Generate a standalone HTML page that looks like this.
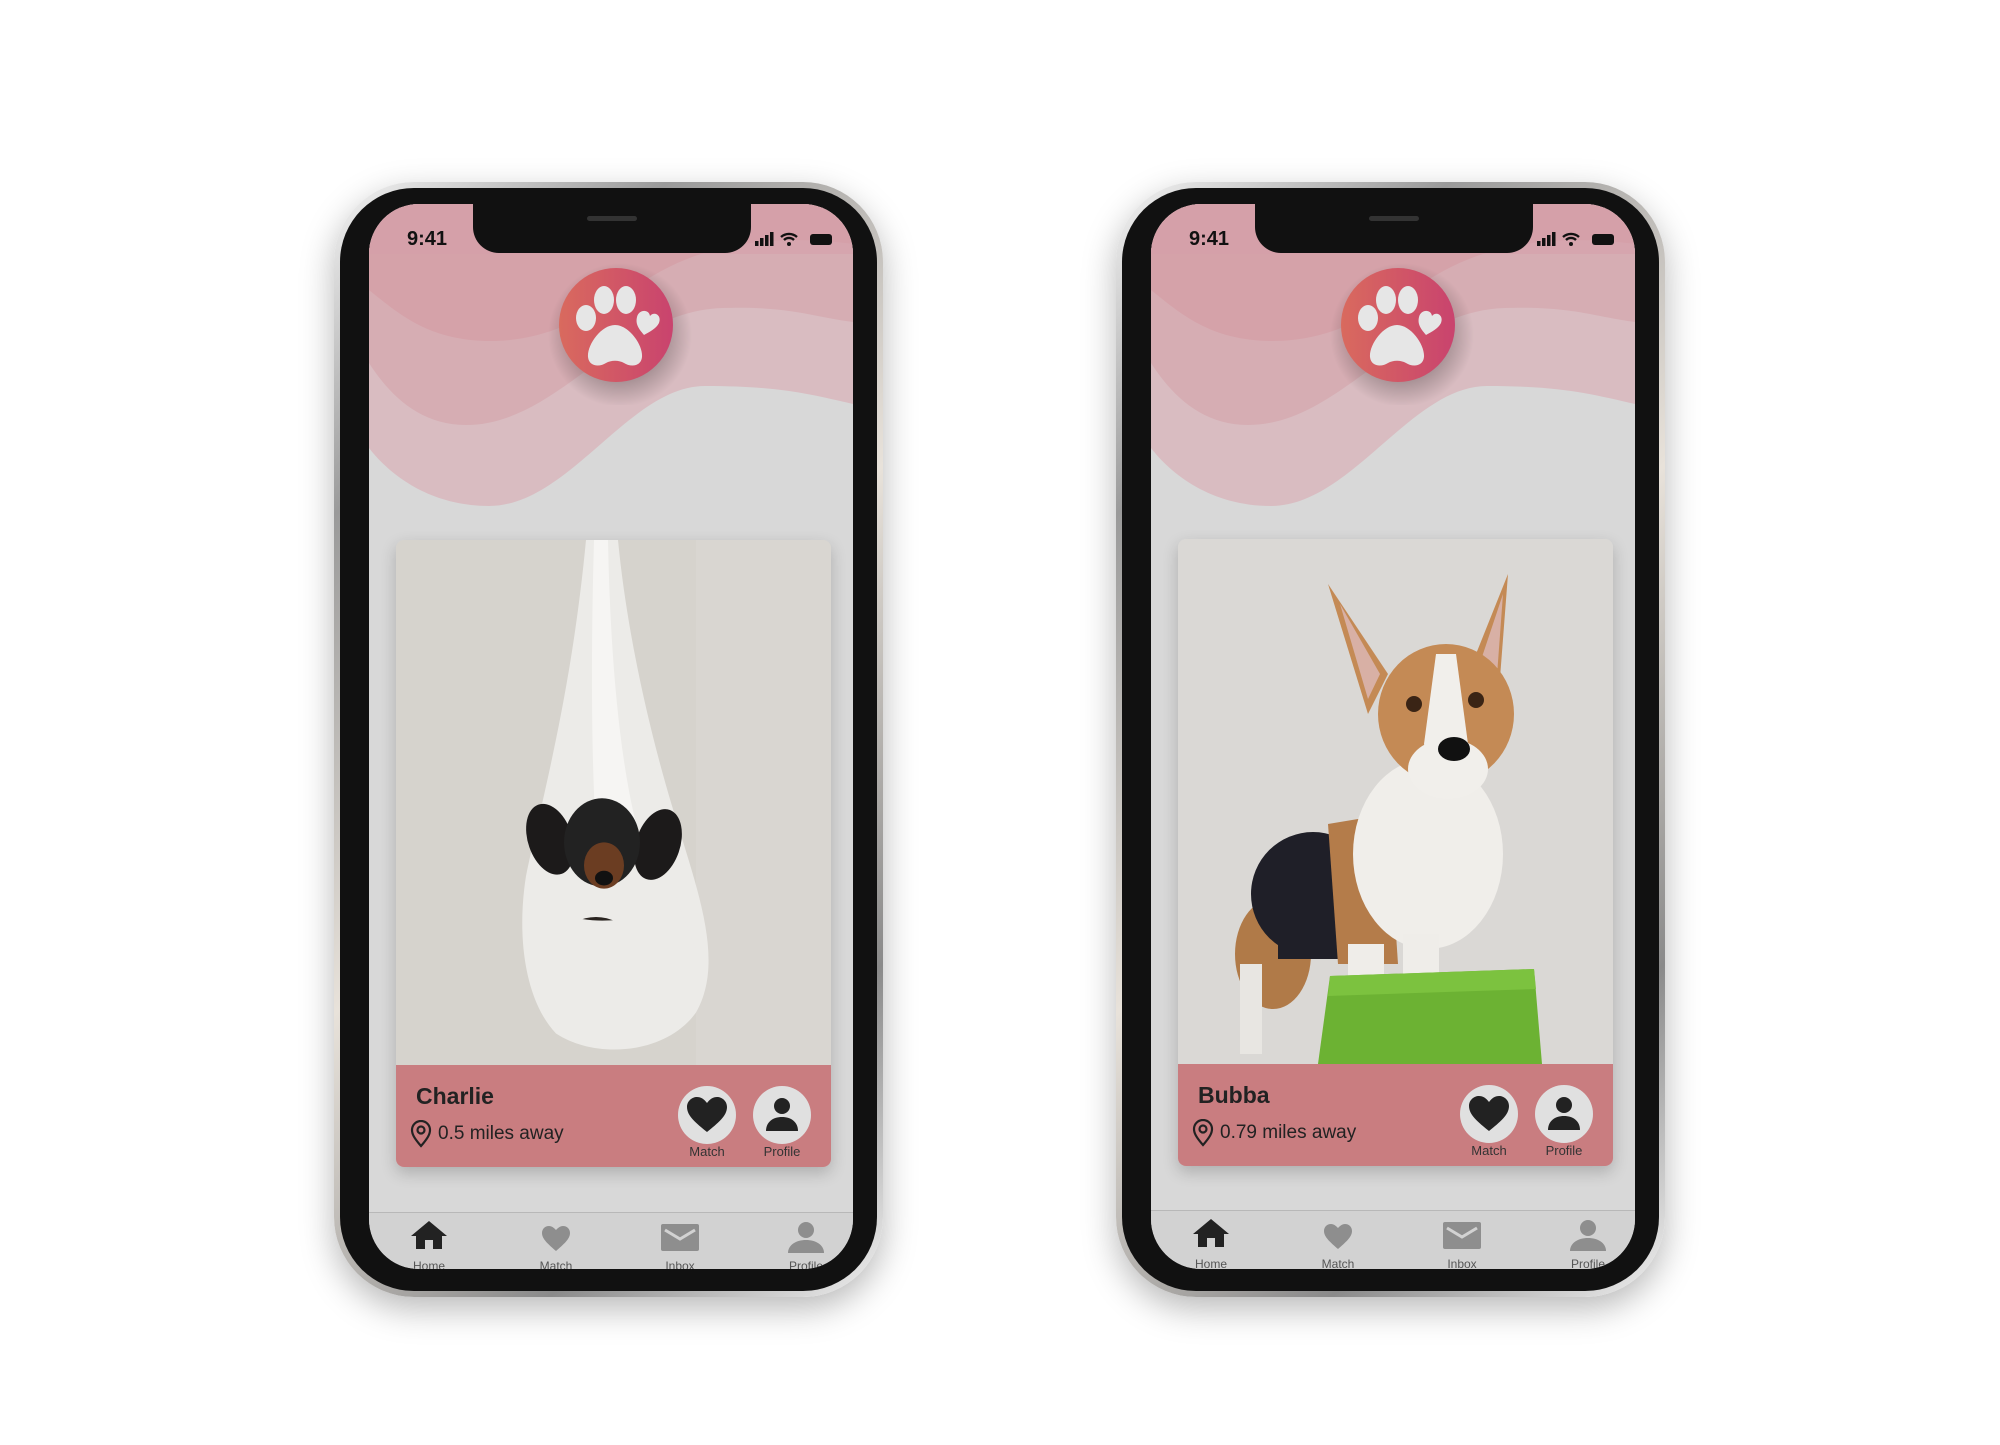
<!DOCTYPE html>
<html><head><meta charset="utf-8"><style>
*{margin:0;padding:0;box-sizing:border-box}
body{width:2000px;height:1445px;background:#fff;position:relative;overflow:hidden;font-family:"Liberation Sans",sans-serif}
.phone{position:absolute;top:0;left:0;width:2000px;height:1445px}
.rim{position:absolute;left:334px;top:182px;width:549px;height:1115px;border-radius:80px;background:linear-gradient(135deg,#f4f4f4,#9a9a9a 20%,#e8e2da 50%,#8a8a8a 80%,#f0f0f0);box-shadow:0 12px 34px rgba(0,0,0,.28)}
.bez{position:absolute;left:340px;top:188px;width:537px;height:1103px;border-radius:74px;background:#111}
.scr{position:absolute;left:369px;top:204px;width:484px;height:1065px;border-radius:50px;overflow:hidden;background:#d8d8d8}
.abs{position:absolute}
.notch{left:104px;top:0;width:278px;height:49px;background:#111;border-radius:0 0 26px 26px}
.time{left:38px;top:24px;font-size:20px;font-weight:bold;color:#111}
.card{left:27px;top:336px;width:435px;height:627px;border-radius:8px;overflow:hidden;box-shadow:0 6px 16px rgba(0,0,0,.2)}
.band{left:0;top:525px;width:435px;height:102px;background:#c97d80}
.name{left:20px;top:18px;font-size:23px;font-weight:bold;color:#222}
.loc{left:14px;top:55px;font-size:19px;color:#222;display:flex;align-items:center;gap:6px}
.btn{width:58px;height:58px;border-radius:50%;background:#e0e0e0;top:21px}
.lbl{font-size:13px;color:#333;top:79px;width:70px;text-align:center}
.nav{left:0;top:1008px;width:484px;height:62px;background:#d2d2d2;border-top:1px solid #b8b8b8}
.nl{font-size:12px;color:#555;width:70px;text-align:center;top:46px}
</style></head><body>

<!-- PHONE 1 -->
<div class="phone">
<div class="rim"></div><div class="bez"></div>
<div class="scr">
<svg class="abs" style="left:0;top:0" width="484" height="420">
<path d="M0 0H484V200C440 190 410 182 336 182C260 182 200 302 120 302C60 302 20 270 0 244Z" fill="#d9bcc1"/>
<path d="M0 0H484V118C440 112 420 102 354 104C250 107 190 221 97 221C50 221 20 190 0 159Z" fill="#d6adb3"/>
<path d="M0 0H484V40C430 33 360 33 300 63C250 88 200 137 122 137C60 137 30 110 0 86Z" fill="#d5a2a9"/>
<path d="M0 0H484V50H0Z" fill="#d59ea9" opacity=".5"/>
</svg>
<div class="abs notch"><div class="abs" style="left:114px;top:12px;width:50px;height:5px;border-radius:3px;background:#333"></div></div>
<div class="abs time">9:41</div>
<svg class="abs" style="left:384px;top:26px" width="85" height="20">
<rect x="2" y="11" width="3.5" height="5" fill="#111"/><rect x="7" y="8" width="3.5" height="8" fill="#111"/><rect x="12" y="5" width="3.5" height="11" fill="#111"/><rect x="17" y="2" width="3.5" height="14" fill="#111"/>
<path d="M28 7a12 12 0 0 1 16 0M31 10a7 7 0 0 1 10 0" stroke="#111" stroke-width="2.4" fill="none"/><circle cx="36" cy="14" r="2" fill="#111"/>
<rect x="57" y="4" width="22" height="11" rx="3" fill="#111"/>
</svg>
<svg class="abs" style="left:176px;top:51px" width="150" height="150">
<defs><linearGradient id="g1" x1="0" x2="1"><stop offset="0" stop-color="#d96a5e"/><stop offset="1" stop-color="#c9436e"/></linearGradient>
<radialGradient id="sh"><stop offset=".6" stop-color="rgba(0,0,0,.25)"/><stop offset="1" stop-color="rgba(0,0,0,0)"/></radialGradient></defs>
<circle cx="75" cy="80" r="72" fill="url(#sh)"/>
<circle cx="71" cy="70" r="57" fill="url(#g1)"/>
<ellipse cx="41" cy="63" rx="10" ry="13" fill="#e6e6e6"/><ellipse cx="59" cy="45" rx="10" ry="14" fill="#e6e6e6"/><ellipse cx="81" cy="45" rx="10" ry="14" fill="#e6e6e6"/>
<path d="M92 62c2-8 12-8 13-1c4-5 12-1 9 7c-3 6-10 9-15 12c-4-5-9-10-7-18z" fill="#e6e6e6"/>
<path d="M70 70c-14 0-28 20-27 32c1 10 12 10 18 6c5-3 13-3 18 0c6 4 17 4 18-6c1-12-13-32-27-32z" fill="#e6e6e6"/>
</svg>
<div class="abs card">
<svg class="abs" style="left:0;top:0" width="435" height="525" viewBox="0 0 435 500" preserveAspectRatio="none">
<rect width="435" height="500" fill="#d6d3cd"/>
<rect x="300" width="135" height="500" fill="#d9d6d1"/>
<path d="M190 0H222C230 80 250 170 275 250C300 330 330 400 300 450C270 490 200 495 160 470C130 440 120 380 130 320C145 250 175 150 190 0Z" fill="#ecebe8"/>
<path d="M198 0H212C214 100 222 200 240 270L200 280C195 200 195 100 198 0Z" fill="#f6f5f3"/>
<ellipse cx="154" cy="285" rx="22" ry="35" fill="#1c1a1a" transform="rotate(-20 154 285)"/>
<ellipse cx="262" cy="290" rx="22" ry="35" fill="#1c1a1a" transform="rotate(20 262 290)"/>
<ellipse cx="206" cy="288" rx="38" ry="42" fill="#222"/>
<ellipse cx="208" cy="310" rx="20" ry="22" fill="#6b3d22"/>
<ellipse cx="208" cy="322" rx="9" ry="7" fill="#111"/>
<ellipse cx="200" cy="375" rx="28" ry="16" fill="#2a2420"/>
<path d="M140 340C170 370 240 370 280 340L300 390C260 420 180 420 140 390Z" fill="#ecebe8"/>
</svg>
<div class="abs band">
<div class="abs name">Charlie</div>
<div class="abs loc"><svg width="22" height="28" viewBox="0 0 22 28"><path d="M11 26C4 18 2 14 2 10a9 9 0 0 1 18 0c0 4-2 8-9 16z" fill="none" stroke="#222" stroke-width="2.2"/><circle cx="11" cy="10" r="3.5" fill="none" stroke="#222" stroke-width="2.2"/></svg>0.5 miles away</div>
<div class="abs btn" style="left:282px"><svg width="58" height="58"><path d="M29 46C18 37 9 30 9 21c0-6 5-10 10-10 4 0 7 2 10 6 3-4 6-6 10-6 5 0 10 4 10 10 0 9-9 16-20 25z" fill="#222"/></svg></div>
<div class="abs btn" style="left:357px"><svg width="58" height="58"><circle cx="29" cy="20" r="8" fill="#222"/><path d="M13 45c0-9 7-14 16-14s16 5 16 14z" fill="#222"/></svg></div>
<div class="abs lbl" style="left:276px">Match</div>
<div class="abs lbl" style="left:351px">Profile</div>
</div>
</div>
<div class="abs nav">
<svg class="abs" style="left:0;top:0" width="484" height="50">
<path d="M60 8L42 23h5v13h9v-9h8v9h9V23h5z" fill="#222"/>
<path d="M187 38C179 31 173 26 173 20c0-4 3-7 7-7 3 0 5 2 7 4 2-2 4-4 7-4 4 0 7 3 7 7 0 6-6 11-14 18z" fill="#8e8e8e"/>
<rect x="292" y="11" width="38" height="27" rx="2" fill="#8e8e8e"/><path d="M296 17l15 9 15-9" stroke="#d2d2d2" stroke-width="3" fill="none"/>
<circle cx="437" cy="17" r="8" fill="#8e8e8e"/><path d="M419 40c0-8 8-13 18-13s18 5 18 13z" fill="#8e8e8e"/>
</svg>
<div class="abs nl" style="left:25px">Home</div><div class="abs nl" style="left:152px">Match</div><div class="abs nl" style="left:276px">Inbox</div><div class="abs nl" style="left:402px">Profile</div>
</div>
</div>
</div>

<!-- PHONE 2 -->
<div class="phone" style="left:782px">
<div class="rim"></div><div class="bez"></div>
<div class="scr">
<svg class="abs" style="left:0;top:0" width="484" height="420">
<path d="M0 0H484V200C440 190 410 182 336 182C260 182 200 302 120 302C60 302 20 270 0 244Z" fill="#d9bcc1"/>
<path d="M0 0H484V118C440 112 420 102 354 104C250 107 190 221 97 221C50 221 20 190 0 159Z" fill="#d6adb3"/>
<path d="M0 0H484V40C430 33 360 33 300 63C250 88 200 137 122 137C60 137 30 110 0 86Z" fill="#d5a2a9"/>
<path d="M0 0H484V50H0Z" fill="#d59ea9" opacity=".5"/>
</svg>
<div class="abs notch"><div class="abs" style="left:114px;top:12px;width:50px;height:5px;border-radius:3px;background:#333"></div></div>
<div class="abs time">9:41</div>
<svg class="abs" style="left:384px;top:26px" width="85" height="20">
<rect x="2" y="11" width="3.5" height="5" fill="#111"/><rect x="7" y="8" width="3.5" height="8" fill="#111"/><rect x="12" y="5" width="3.5" height="11" fill="#111"/><rect x="17" y="2" width="3.5" height="14" fill="#111"/>
<path d="M28 7a12 12 0 0 1 16 0M31 10a7 7 0 0 1 10 0" stroke="#111" stroke-width="2.4" fill="none"/><circle cx="36" cy="14" r="2" fill="#111"/>
<rect x="57" y="4" width="22" height="11" rx="3" fill="#111"/>
</svg>
<svg class="abs" style="left:176px;top:51px" width="150" height="150">
<defs><linearGradient id="g2" x1="0" x2="1"><stop offset="0" stop-color="#d96a5e"/><stop offset="1" stop-color="#c9436e"/></linearGradient>
<radialGradient id="sh2"><stop offset=".6" stop-color="rgba(0,0,0,.25)"/><stop offset="1" stop-color="rgba(0,0,0,0)"/></radialGradient></defs>
<circle cx="75" cy="80" r="72" fill="url(#sh2)"/>
<circle cx="71" cy="70" r="57" fill="url(#g2)"/>
<ellipse cx="41" cy="63" rx="10" ry="13" fill="#e6e6e6"/><ellipse cx="59" cy="45" rx="10" ry="14" fill="#e6e6e6"/><ellipse cx="81" cy="45" rx="10" ry="14" fill="#e6e6e6"/>
<path d="M92 62c2-8 12-8 13-1c4-5 12-1 9 7c-3 6-10 9-15 12c-4-5-9-10-7-18z" fill="#e6e6e6"/>
<path d="M70 70c-14 0-28 20-27 32c1 10 12 10 18 6c5-3 13-3 18 0c6 4 17 4 18-6c1-12-13-32-27-32z" fill="#e6e6e6"/>
</svg>
<div class="abs card" style="top:335px">
<svg class="abs" style="left:0;top:0" width="435" height="525" viewBox="0 -25 435 525">
<rect y="-25" width="435" height="525" fill="#dad8d5"/>
<ellipse cx="95" cy="390" rx="38" ry="55" fill="#b07a48"/>
<rect x="62" y="400" width="22" height="90" fill="#e8e6e2"/>
<ellipse cx="135" cy="330" rx="62" ry="62" fill="#1f1f28"/>
<rect x="100" y="340" width="60" height="55" fill="#1f1f28"/>
<path d="M150 260L210 250 220 400 160 400Z" fill="#b47c4a"/>
<ellipse cx="250" cy="290" rx="75" ry="95" fill="#f0eeea"/>
<rect x="170" y="380" width="36" height="95" fill="#efede9"/>
<rect x="225" y="370" width="36" height="95" fill="#efede9"/>
<path d="M150 20L210 110 190 150Z" fill="#c48a55"/>
<path d="M330 10L290 110 320 140Z" fill="#c48a55"/>
<path d="M162 40L202 110 190 135Z" fill="#d8b0a5"/>
<path d="M325 30L300 105 318 125Z" fill="#d8b0a5"/>
<ellipse cx="268" cy="150" rx="68" ry="70" fill="#c48a55"/>
<path d="M258 90h20l12 90c0 20-40 20-44 0z" fill="#f1efeb"/>
<ellipse cx="270" cy="205" rx="40" ry="30" fill="#f1efeb"/>
<circle cx="236" cy="140" r="8" fill="#3a2415"/><circle cx="298" cy="136" r="8" fill="#3a2415"/>
<ellipse cx="276" cy="185" rx="16" ry="12" fill="#111"/>
<path d="M152 412L356 405 364 500H140Z" fill="#6cb233"/>
<path d="M152 412L356 405 358 425 150 432Z" fill="#7cc23f"/>
</svg>
<div class="abs band">
<div class="abs name">Bubba</div>
<div class="abs loc"><svg width="22" height="28" viewBox="0 0 22 28"><path d="M11 26C4 18 2 14 2 10a9 9 0 0 1 18 0c0 4-2 8-9 16z" fill="none" stroke="#222" stroke-width="2.2"/><circle cx="11" cy="10" r="3.5" fill="none" stroke="#222" stroke-width="2.2"/></svg>0.79 miles away</div>
<div class="abs btn" style="left:282px"><svg width="58" height="58"><path d="M29 46C18 37 9 30 9 21c0-6 5-10 10-10 4 0 7 2 10 6 3-4 6-6 10-6 5 0 10 4 10 10 0 9-9 16-20 25z" fill="#222"/></svg></div>
<div class="abs btn" style="left:357px"><svg width="58" height="58"><circle cx="29" cy="20" r="8" fill="#222"/><path d="M13 45c0-9 7-14 16-14s16 5 16 14z" fill="#222"/></svg></div>
<div class="abs lbl" style="left:276px">Match</div>
<div class="abs lbl" style="left:351px">Profile</div>
</div>
</div>
<div class="abs nav" style="top:1006px">
<svg class="abs" style="left:0;top:0" width="484" height="50">
<path d="M60 8L42 23h5v13h9v-9h8v9h9V23h5z" fill="#222"/>
<path d="M187 38C179 31 173 26 173 20c0-4 3-7 7-7 3 0 5 2 7 4 2-2 4-4 7-4 4 0 7 3 7 7 0 6-6 11-14 18z" fill="#8e8e8e"/>
<rect x="292" y="11" width="38" height="27" rx="2" fill="#8e8e8e"/><path d="M296 17l15 9 15-9" stroke="#d2d2d2" stroke-width="3" fill="none"/>
<circle cx="437" cy="17" r="8" fill="#8e8e8e"/><path d="M419 40c0-8 8-13 18-13s18 5 18 13z" fill="#8e8e8e"/>
</svg>
<div class="abs nl" style="left:25px">Home</div><div class="abs nl" style="left:152px">Match</div><div class="abs nl" style="left:276px">Inbox</div><div class="abs nl" style="left:402px">Profile</div>
</div>
</div>
</div>
</body></html>
